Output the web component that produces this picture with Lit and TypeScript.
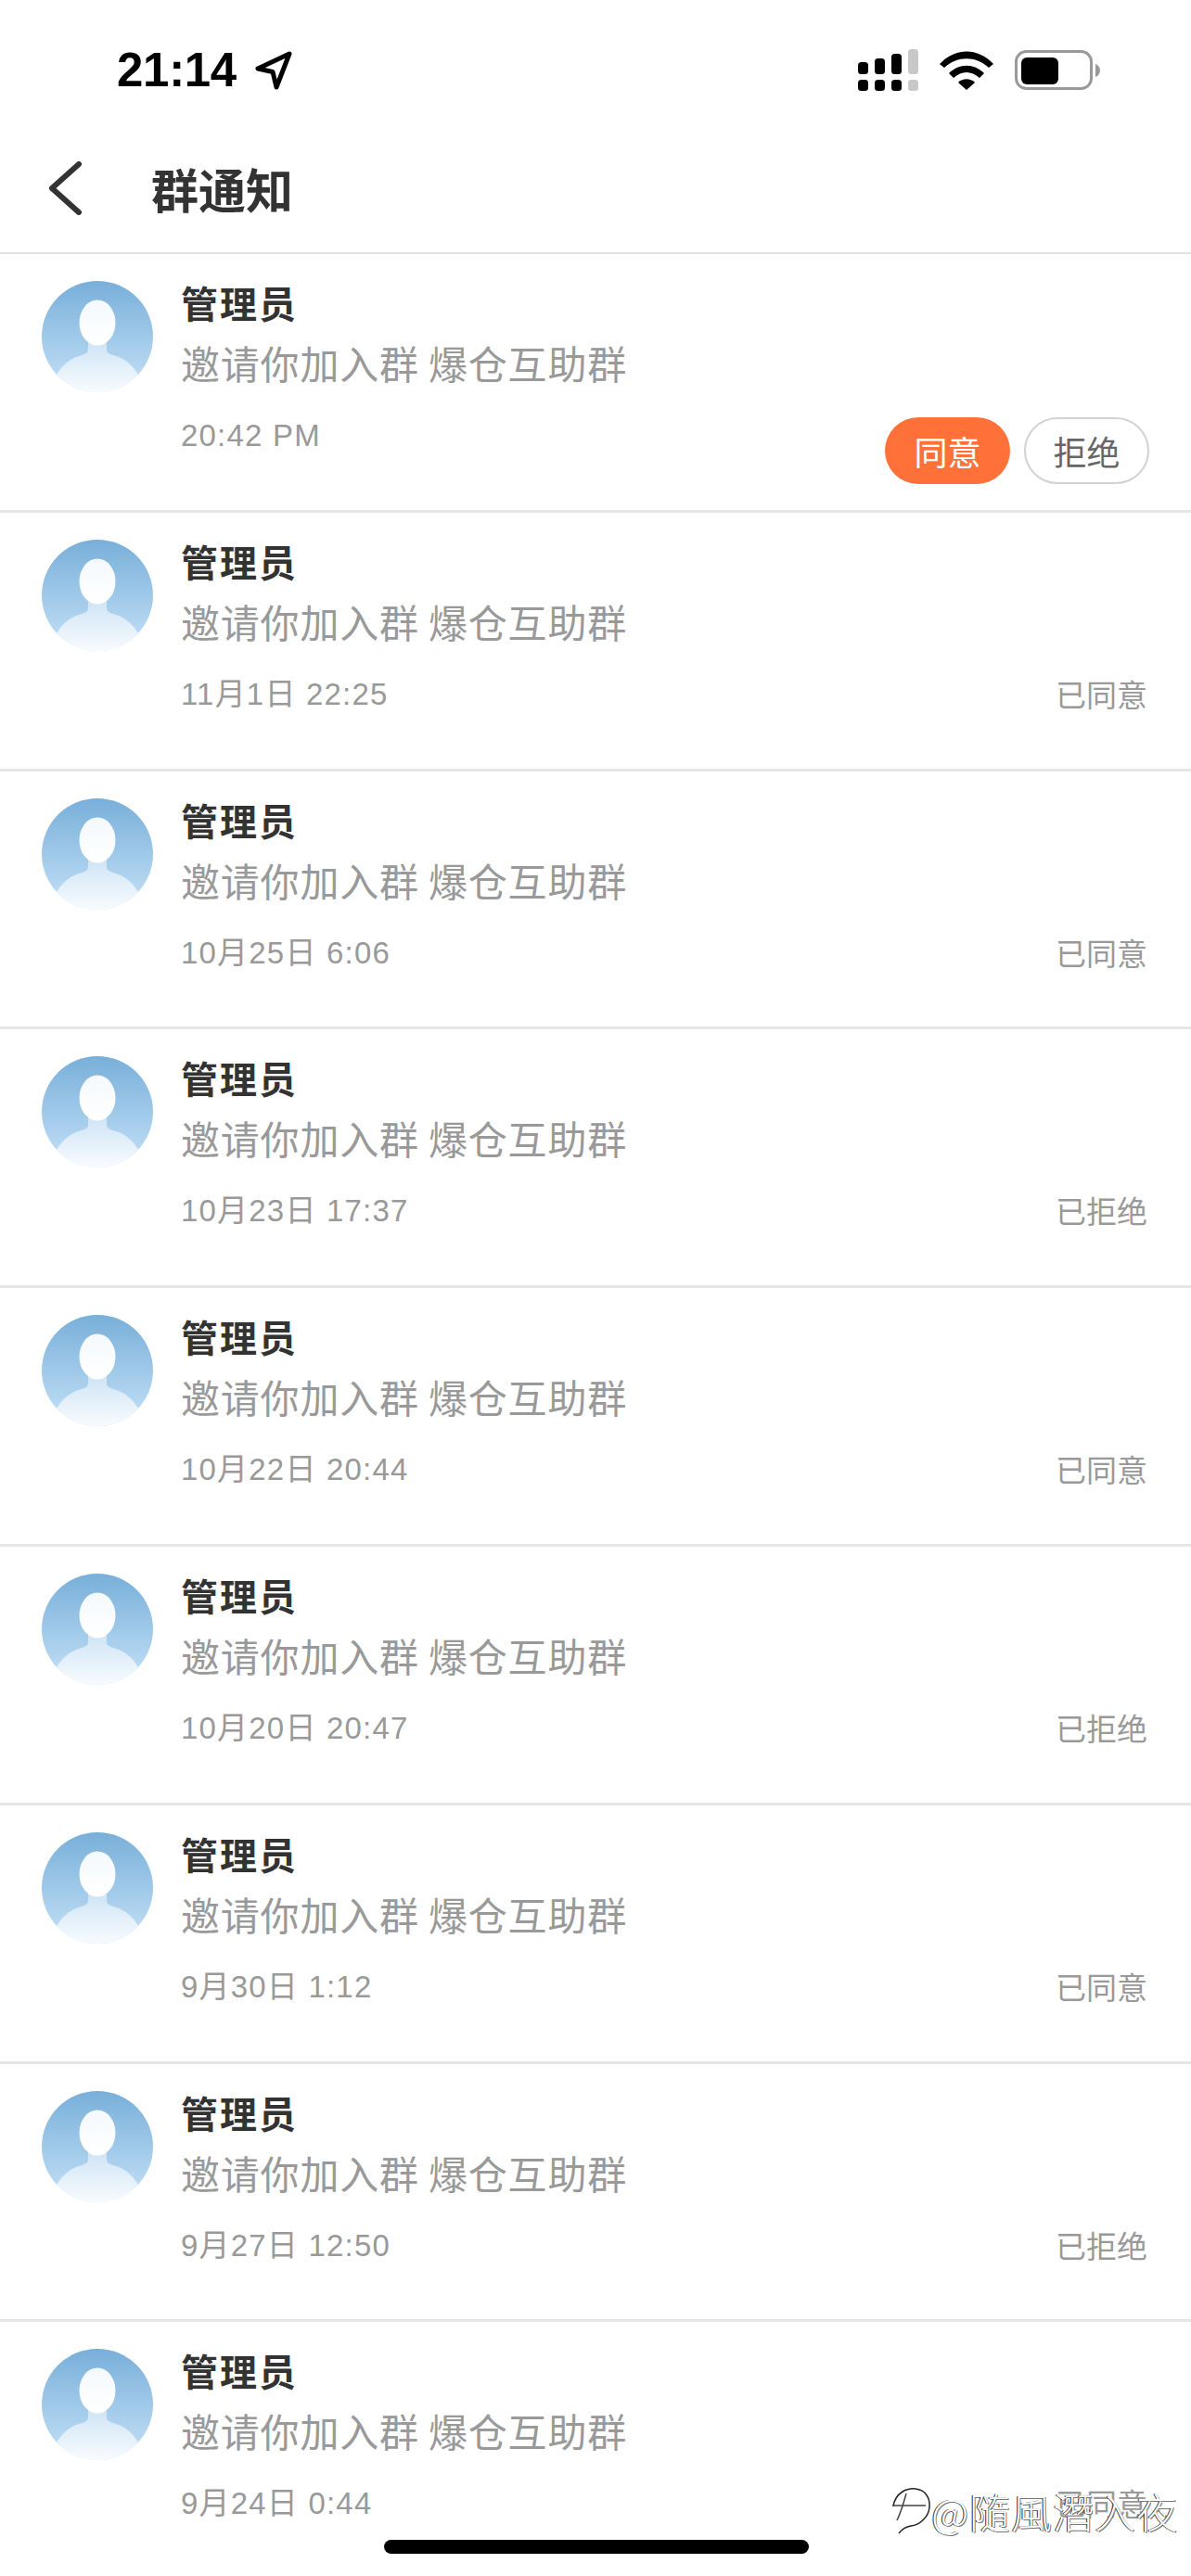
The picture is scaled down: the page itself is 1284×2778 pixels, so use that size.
import { LitElement, html, css, svg } from "lit";
import { customElement } from "lit/decorators.js";

type Row = { time: string; status?: string };
const ROWS: Row[] = [
  { time: "20:42 PM" },
  { time: "11月1日 22:25", status: "已同意" },
  { time: "10月25日 6:06", status: "已同意" },
  { time: "10月23日 17:37", status: "已拒绝" },
  { time: "10月22日 20:44", status: "已同意" },
  { time: "10月20日 20:47", status: "已拒绝" },
  { time: "9月30日 1:12", status: "已同意" },
  { time: "9月27日 12:50", status: "已拒绝" },
  { time: "9月24日 0:44", status: "已同意" },
];

const avatar = (i: number) => html`<svg class="avatar" viewBox="0 0 120 120" aria-hidden="true">
  <defs>
    <linearGradient id="bg${i}" x1="0" y1="0" x2="0" y2="1">
      <stop offset="0" stop-color="#78AFD9" />
      <stop offset="1" stop-color="#C6E2F8" />
    </linearGradient>
    <linearGradient id="body${i}" x1="0" y1="0" x2="0" y2="1">
      <stop offset="0" stop-color="#CFE4F5" />
      <stop offset="1" stop-color="#FBFDFF" />
    </linearGradient>
    <linearGradient id="head${i}" x1="0" y1="0" x2="0" y2="1">
      <stop offset="0" stop-color="#F4F9FD" />
      <stop offset="1" stop-color="#FFFFFF" />
    </linearGradient>
    <clipPath id="clip${i}"><circle cx="60" cy="60" r="60" /></clipPath>
  </defs>
  <g clip-path="url(#clip${i})">
    <rect width="120" height="120" fill="url(#bg${i})" />
    ${svg`<path fill="url(#body${i})" d="M50 66 L50 74 C50 78 46 79 40 81 C30 84 22 91 16 101 L16 124 L104 124 L104 101 C98 91 90 84 80 81 C74 79 70 78 70 74 L70 66 Z" />`}
    <ellipse cx="60" cy="45" rx="19.5" ry="24.5" fill="url(#head${i})" />
  </g>
</svg>`;

@customElement("app-root")
export class AppRoot extends LitElement {
  static styles = css`
    :host {
      display: block;
      position: relative;
      width: 1284px;
      height: 2778px;
      overflow: hidden;
      background: #fff;
      font-family: "Noto Sans CJK SC", sans-serif;
    }
    .status {
      height: 152px;
      display: flex;
      align-items: flex-start;
      box-sizing: border-box;
      padding: 50px 98px 0 126px;
      justify-content: space-between;
    }
    .clock {
      display: flex;
      align-items: center;
      gap: 18px;
      font: 600 51px/52px "Liberation Sans", sans-serif;
      color: #000;
      letter-spacing: -0.3px;
    }
    .indicators {
      display: flex;
      align-items: center;
      gap: 23px;
      margin-top: 3px;
    }
    .nav {
      height: 122px;
      display: flex;
      align-items: center;
      box-sizing: border-box;
      padding: 0 0 18px 52px;
      border-bottom: 2px solid #e3e3e3;
    }
    .title {
      margin-left: 73px;
      font-size: 51px;
      font-weight: 700;
      line-height: 60px;
      color: #333;
    }
    .list {
      display: flex;
      flex-direction: column;
    }
    .row {
      height: 278.8px;
      box-sizing: border-box;
      flex: none;
      display: flex;
      gap: 30px;
      padding: 29px 45px 0 45px;
      border-bottom: 3px solid #e6e6e6;
    }
    .avatar {
      width: 120px;
      height: 120px;
      flex: none;
    }
    .body {
      flex: 1;
      min-width: 0;
      margin-top: 1px;
    }
    .name {
      font-size: 40px;
      line-height: 44px;
      font-weight: 700;
      color: #333;
      letter-spacing: 2px;
    }
    .sub {
      margin-top: 18px;
      font-size: 42px;
      line-height: 50px;
      color: #999;
      letter-spacing: 0.8px;
      white-space: pre;
    }
    .meta {
      margin-top: 33px;
      display: flex;
      justify-content: space-between;
      align-items: flex-start;
    }
    .time {
      font-family: "Liberation Sans", "Noto Sans CJK SC", sans-serif;
      font-size: 33px;
      line-height: 40px;
      margin-top: 1px;
      color: #999;
      letter-spacing: 1.2px;
    }
    .state {
      font-size: 33px;
      line-height: 40px;
      color: #999;
      margin-right: 2px;
    }
    .actions {
      display: flex;
      gap: 15px;
      margin-top: 1px;
    }
    .btn {
      width: 135px;
      height: 72px;
      box-sizing: border-box;
      border-radius: 36px;
      display: flex;
      align-items: center;
      justify-content: center;
      font-size: 36px;
      line-height: 38px;
    }
    .agree {
      background: #ff7139;
      color: #fff;
    }
    .reject {
      border: 2px solid #d2d2d2;
      color: #666;
    }
    .watermark {
      position: absolute;
      left: 960px;
      top: 2680px;
      display: flex;
      align-items: center;
      gap: 0;
      color: #fff;
      font-size: 44px;
      line-height: 56px;
      font-weight: 300;
      letter-spacing: 1px;
      white-space: nowrap;
      text-shadow: -1px 0 0 #222, 1px 1px 0 #777;
    }
    .home {
      position: absolute;
      left: 414px;
      top: 2739px;
      width: 458px;
      height: 15px;
      border-radius: 8px;
      background: #000;
    }
  `;

  render() {
    return html`
      <div class="status">
        <div class="clock">
          <span>21:14</span>
          <svg width="44" height="44" viewBox="0 0 44 44" aria-hidden="true">
            <path d="M39 4 L5 20 L21 23.5 L25 40 Z" fill="none" stroke="#000" stroke-width="5" stroke-linejoin="round" />
          </svg>
        </div>
        <div class="indicators">
          <svg width="66" height="46" viewBox="0 0 66 46" aria-hidden="true">
            <rect x="1" y="14" width="11" height="13" rx="3.5" />
            <rect x="19" y="10" width="11" height="17" rx="3.5" />
            <rect x="37" y="5" width="11" height="22" rx="3.5" />
            <rect x="55" y="0" width="11" height="27" rx="3.5" fill="#c8c8c8" />
            <rect x="1" y="33" width="11" height="12" rx="3.5" />
            <rect x="19" y="33" width="11" height="12" rx="3.5" />
            <rect x="37" y="33" width="11" height="12" rx="3.5" />
            <rect x="55" y="33" width="11" height="12" rx="3.5" fill="#c8c8c8" />
          </svg>
          <svg width="58" height="42" viewBox="0 0 58 42" aria-hidden="true">
            <path d="M0 14 C17 -4 41 -4 58 14 L53 18 C39 5 19 5 5 18 Z" />
            <path d="M10 24 C21 13 37 13 48 24 L43 29 C34 21 24 21 15 29 Z" />
            <path d="M20 34 C25 29 33 29 38 34 L29 42 Z" />
          </svg>
          <svg width="92" height="44" viewBox="0 0 92 44" aria-hidden="true">
            <rect x="1.5" y="1.5" width="81" height="40" rx="11" fill="none" stroke="#999" stroke-width="3" />
            <rect x="7" y="8" width="40" height="29" rx="6" />
            <path d="M87 15 C90 16 92 19 92 22 C92 25 90 28 87 29 Z" fill="#999" />
          </svg>
        </div>
      </div>
      <div class="nav">
        <svg width="38" height="58" viewBox="0 0 38 58" aria-hidden="true">
          <path d="M33 3 L4 29 L33 55" fill="none" stroke="#333" stroke-width="6" stroke-linecap="round" stroke-linejoin="round" />
        </svg>
        <div class="title">群通知</div>
      </div>
      <div class="list">
        ${ROWS.map(
          (r, i) => html`<div class="row">
            ${avatar(i)}
            <div class="body">
              <div class="name">管理员</div>
              <div class="sub">邀请你加入群 爆仓互助群</div>
              <div class="meta">
                <span class="time">${r.time}</span>
                ${r.status
                  ? html`<span class="state">${r.status}</span>`
                  : html`<div class="actions">
                      <div class="btn agree">同意</div>
                      <div class="btn reject">拒绝</div>
                    </div>`}
              </div>
            </div>
          </div>`
        )}
      </div>
      <div class="watermark">
        <svg width="44" height="52" viewBox="0 0 44 52" aria-hidden="true">
          <path d="M3 21 C5 6 18 1 27 2 C37 3 43 11 42 22 C41 33 31 41 22 42 C16 43 12 46 9 50" fill="none" stroke="#222" stroke-width="1.5" />
          <path d="M2 20 H38 M17 7 C14 18 11 28 7 36" fill="none" stroke="#444" stroke-width="1.5" />
        </svg>
        <span>@隨風潛入夜</span>
      </div>
      <div class="home"></div>
    `;
  }
}
